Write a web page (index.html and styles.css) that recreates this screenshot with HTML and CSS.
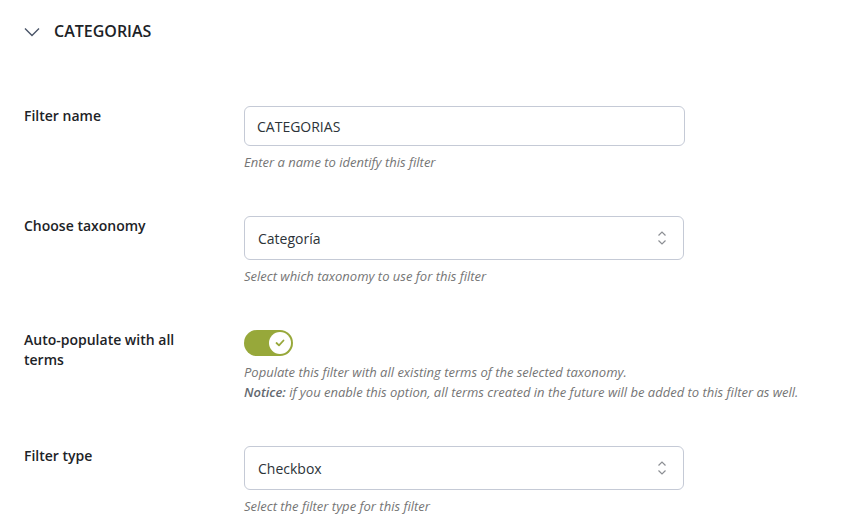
FILE: index.html
```html
<!DOCTYPE html>
<html lang="es">
<head>
    <meta charset="UTF-8">
    <meta name="viewport" content="width=device-width, initial-scale=1.0">
    <title>Filtro: Categorias</title>
    <link rel="stylesheet" href="styles.css">
</head>
<body>
    <!-- Panel del filtro -->
    <section class="filter-panel">
        <div class="panel-head">
            <svg class="chevron" width="16" height="10" viewBox="0 0 16 10">
                <path d="M1 1.5 L8 8.5 L15 1.5" fill="none" stroke="#4a5568" stroke-width="1.4"/>
            </svg>
            <h2 class="panel-title">CATEGORIAS</h2>
        </div>

        <div class="field-row">
            <div class="field-label">Filter name</div>
            <div class="field-body">
                <input class="text-input" type="text" value="CATEGORIAS">
                <p class="help">Enter a name to identify this filter</p>
            </div>
        </div>

        <div class="field-row">
            <div class="field-label">Choose taxonomy</div>
            <div class="field-body">
                <div class="select-box">
                    <span>Categoría</span>
                    <svg class="updown" width="10" height="16" viewBox="0 0 10 16">
                        <path d="M1.5 5.5 L5 2 L8.5 5.5 M1.5 10.5 L5 14 L8.5 10.5" fill="none" stroke="#8c8f94" stroke-width="1.2"/>
                    </svg>
                </div>
                <p class="help">Select which taxonomy to use for this filter</p>
            </div>
        </div>

        <div class="field-row">
            <div class="field-label">Auto-populate with all terms</div>
            <div class="field-body">
                <div class="toggle is-on">
                    <span class="knob">
                        <svg width="10" height="8" viewBox="0 0 10 8">
                            <path d="M1.5 4 L4 6.3 L8.5 1.5" fill="none" stroke="#97a83a" stroke-width="1.8" stroke-linecap="round" stroke-linejoin="round"/>
                        </svg>
                    </span>
                </div>
                <p class="help">Populate this filter with all existing terms of the selected taxonomy.<br><strong>Notice:</strong> if you enable this option, all terms created in the future will be added to this filter as well.</p>
            </div>
        </div>

        <div class="field-row">
            <div class="field-label">Filter type</div>
            <div class="field-body">
                <div class="select-box">
                    <span>Checkbox</span>
                    <svg class="updown" width="10" height="16" viewBox="0 0 10 16">
                        <path d="M1.5 5.5 L5 2 L8.5 5.5 M1.5 10.5 L5 14 L8.5 10.5" fill="none" stroke="#8c8f94" stroke-width="1.2"/>
                    </svg>
                </div>
                <p class="help">Select the filter type for this filter</p>
            </div>
        </div>
    </section>
</body>
</html>
```

FILE: styles.css
```css
body {
    margin: 0;
    padding: 0;
    background: #fff;
    color: #1d2327;
    font-family: "Open Sans", "Noto Sans", Arial, sans-serif;
}

.filter-panel {
    padding: 0 24px;
}

.panel-head {
    display: flex;
    align-items: center;
    gap: 14px;
    padding: 20px 0;
    margin-bottom: 22px;
}

.chevron {
    display: block;
    margin-top: 1px;
}

.panel-title {
    margin: 0;
    font-size: 16px;
    line-height: 22px;
    font-weight: 600;
    color: #1d2327;
}

.field-row {
    display: flex;
    padding: 22px 0;
}

.field-label {
    width: 180px;
    margin-right: 40px;
    font-size: 14px;
    line-height: 20px;
    font-weight: 600;
    color: #1d2327;
}

.field-body {
    flex: 1;
}

.text-input {
    display: block;
    box-sizing: border-box;
    width: 441px;
    height: 40px;
    margin: 0;
    padding: 0 12px;
    border: 1px solid #c5cad6;
    border-radius: 6px;
    font-family: inherit;
    font-size: 14px;
    color: #2c3338;
    outline: none;
}

.select-box {
    box-sizing: border-box;
    width: 440px;
    height: 44px;
    display: flex;
    align-items: center;
    justify-content: space-between;
    padding: 0 16px 0 13px;
    border: 1px solid #c5cad6;
    border-radius: 6px;
    font-size: 14px;
    color: #2c3338;
}

.updown {
    display: block;
}

.help {
    margin: 6px 0 0;
    font-size: 13px;
    line-height: 20px;
    font-style: italic;
    color: #757575;
}

.help strong {
    font-weight: 600;
    color: #646970;
}

.toggle {
    box-sizing: border-box;
    width: 49px;
    height: 26px;
    border-radius: 13px;
    background: #e0e0e0;
    padding: 2px;
    display: flex;
}

.toggle.is-on {
    background: #97a83a;
    justify-content: flex-end;
}

.knob {
    width: 22px;
    height: 22px;
    border-radius: 50%;
    background: #fff;
    display: flex;
    align-items: center;
    justify-content: center;
}
```
